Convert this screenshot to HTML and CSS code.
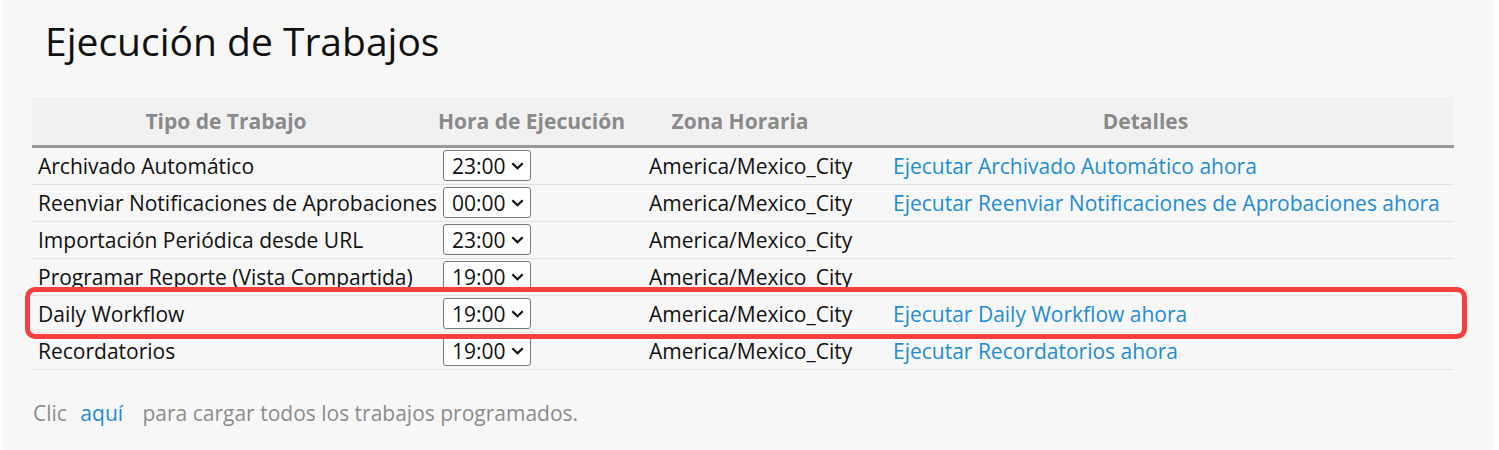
FILE: index.html
```html
<!DOCTYPE html>
<html lang="es">
<head>
<meta charset="utf-8">
<title>Ejecución de Trabajos</title>
<link rel="stylesheet" href="styles.css">
</head>
<body>
<div class="page">
  <h1 class="title">Ejecución de Trabajos</h1>
  <div class="table-wrap">
    <table class="jobs">
      <colgroup>
        <col class="c1"><col class="c2"><col class="c3"><col class="c4">
      </colgroup>
      <thead>
        <tr>
          <th>Tipo de Trabajo</th>
          <th>Hora de Ejecución</th>
          <th>Zona Horaria</th>
          <th>Detalles</th>
        </tr>
      </thead>
      <tbody>
        <tr>
          <td>Archivado Automático</td>
          <td><div class="sel"><span>23:00</span><svg class="chev" width="13" height="8" viewBox="0 0 13 8"><path d="M1.3 1.3 L6.5 6.3 L11.7 1.3" fill="none" stroke="#111" stroke-width="2.2"/></svg></div></td>
          <td>America/Mexico_City</td>
          <td class="det"><a href="#">Ejecutar Archivado Automático ahora</a></td>
        </tr>
        <tr>
          <td>Reenviar Notificaciones de Aprobaciones</td>
          <td><div class="sel"><span>00:00</span><svg class="chev" width="13" height="8" viewBox="0 0 13 8"><path d="M1.3 1.3 L6.5 6.3 L11.7 1.3" fill="none" stroke="#111" stroke-width="2.2"/></svg></div></td>
          <td>America/Mexico_City</td>
          <td class="det"><a href="#">Ejecutar Reenviar Notificaciones de Aprobaciones ahora</a></td>
        </tr>
        <tr>
          <td>Importación Periódica desde URL</td>
          <td><div class="sel"><span>23:00</span><svg class="chev" width="13" height="8" viewBox="0 0 13 8"><path d="M1.3 1.3 L6.5 6.3 L11.7 1.3" fill="none" stroke="#111" stroke-width="2.2"/></svg></div></td>
          <td>America/Mexico_City</td>
          <td class="det"></td>
        </tr>
        <tr>
          <td>Programar Reporte (Vista Compartida)</td>
          <td><div class="sel"><span>19:00</span><svg class="chev" width="13" height="8" viewBox="0 0 13 8"><path d="M1.3 1.3 L6.5 6.3 L11.7 1.3" fill="none" stroke="#111" stroke-width="2.2"/></svg></div></td>
          <td>America/Mexico_City</td>
          <td class="det"></td>
        </tr>
        <tr>
          <td>Daily Workflow</td>
          <td><div class="sel"><span>19:00</span><svg class="chev" width="13" height="8" viewBox="0 0 13 8"><path d="M1.3 1.3 L6.5 6.3 L11.7 1.3" fill="none" stroke="#111" stroke-width="2.2"/></svg></div></td>
          <td>America/Mexico_City</td>
          <td class="det"><a href="#">Ejecutar Daily Workflow ahora</a></td>
        </tr>
        <tr>
          <td>Recordatorios</td>
          <td><div class="sel"><span>19:00</span><svg class="chev" width="13" height="8" viewBox="0 0 13 8"><path d="M1.3 1.3 L6.5 6.3 L11.7 1.3" fill="none" stroke="#111" stroke-width="2.2"/></svg></div></td>
          <td>America/Mexico_City</td>
          <td class="det"><a href="#">Ejecutar Recordatorios ahora</a></td>
        </tr>
      </tbody>
    </table>
    <div class="highlight"></div>
  </div>
  <p class="foot">Clic <a href="#" class="here">aquí</a> para cargar todos los trabajos programados.</p>
</div>
</body>
</html>
```
FILE: styles.css
```css
html, body {
  margin: 0;
  padding: 0;
  background: #ffffff;
}
body {
  font-family: "Open Sans", "Noto Sans", sans-serif;
  color: #111;
}
.page {
  margin-left: 2px;
  width: 1491px;
  height: 450px;
  box-sizing: border-box;
  padding: 0 30px;
  background: #f7f7f7;
  overflow: hidden;
}
.title {
  margin: 0 0 0 13px;
  padding-top: 18px;
  font-size: 39px;
  font-weight: 400;
  line-height: 46px;
  height: 79px;
  color: #111;
  white-space: nowrap;
}
.table-wrap {
  position: relative;
}
.jobs {
  border-collapse: collapse;
  table-layout: fixed;
  width: 1422px;
  font-size: 21px;
}
.c1 { width: 405px; }
.c2 { width: 206px; }
.c3 { width: 211px; }
.c4 { width: 600px; }
.jobs thead tr {
  background: #f1f1f1;
}
.jobs th {
  height: 49px;
  padding: 0 17px 0 0;
  box-sizing: border-box;
  text-align: center;
  font-weight: 700;
  color: #8a8a8a;
  border-bottom: 3px solid #9a9a9a;
  white-space: nowrap;
}
.jobs td {
  height: 36px;
  padding: 0 0 0 6px;
  border-bottom: 1px solid #e2e2e2;
  white-space: nowrap;
  vertical-align: middle;
}
.jobs td.det {
  padding-left: 39px;
}
.jobs a {
  color: #1f8dd3;
  text-decoration: none;
}
.sel {
  display: flex;
  align-items: center;
  justify-content: space-between;
  box-sizing: border-box;
  width: 88px;
  height: 31px;
  padding: 0 6px 0 8px;
  border: 1px solid #7a7a7a;
  border-radius: 3px;
  background: #fff;
  font-size: 21px;
}
.chev {
  display: block;
}
.highlight {
  position: absolute;
  left: -7px;
  top: 190px;
  width: 1442px;
  height: 52px;
  box-sizing: border-box;
  border: 5px solid #f53f3f;
  border-radius: 10px;
  pointer-events: none;
}
.foot {
  margin: 29px 0 0 1px;
  font-size: 21px;
  color: #8c8c8c;
  white-space: nowrap;
}
.foot .here {
  color: #1f8dd3;
  text-decoration: none;
  margin: 0 14px 0 8px;
}
```
